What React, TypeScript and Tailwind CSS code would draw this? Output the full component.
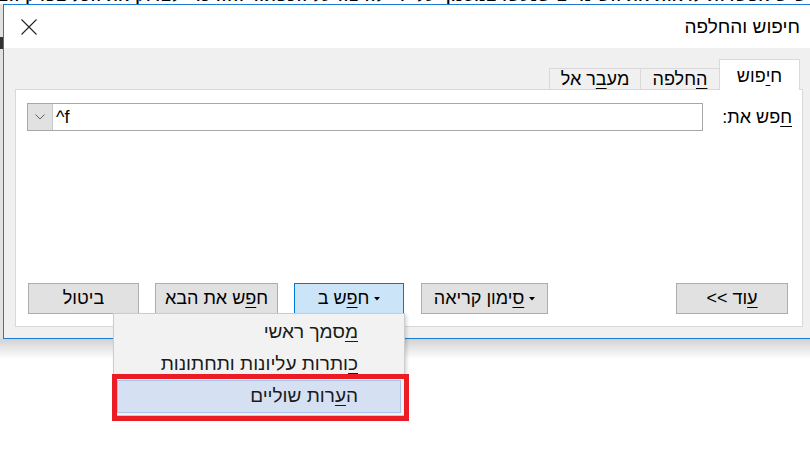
import React from "react";

const U = ({ children }: { children: React.ReactNode }) => (
  <span className="underline decoration-1 underline-offset-[3px]">{children}</span>
);

const Caret = () => (
  <svg width="6" height="4" viewBox="0 0 6 4" className="shrink-0">
    <path d="M0 0 L6 0 L3 3.5 Z" fill="#000" />
  </svg>
);

export default function App() {
  return (
    <div className="relative h-[456px] w-[810px] overflow-hidden bg-white text-black font-['Liberation_Sans','DejaVu_Sans',sans-serif]">
      {/* document text peeking above the dialog */}
      <div dir="rtl" className="h-[4px] overflow-hidden bg-white">
        <div className="-mt-[12px] whitespace-nowrap pr-[3px] text-[15px] font-bold leading-[15px] tracking-[1px]">
          שיש אפשרות לראות את השינויים שנעשו במסמך על ידי לחיצה על הכפתור הזה כדי לבדוק את הכל בפרק הבא
        </div>
      </div>

      <div className="flex h-[335px]">
        <div className="flex w-[3px] flex-col bg-[#e2e2e2]">
          <div className="mt-[33px] h-[12px] bg-[#333333]" />
        </div>
        <div dir="rtl" className="flex flex-1 flex-col border-y border-l border-[#1c7cd5]">
          {/* title bar */}
          <div className="flex h-[43px] shrink-0 items-center justify-between bg-white pl-[17px] pr-[10px]">
            <span className="text-[19px] leading-none">חיפוש והחלפה</span>
            <svg width="16" height="16" viewBox="0 0 16 16">
              <path d="M0.5 0.5 L15.5 15.5 M15.5 0.5 L0.5 15.5" stroke="#222" strokeWidth="1.1" fill="none" />
            </svg>
          </div>

          {/* body */}
          <div className="flex flex-1 flex-col bg-[#f0f0f0] pb-[11px] pl-[11px] pr-[7px] pt-[11px]">
            {/* tabs */}
            <div className="flex h-[30px] shrink-0 items-end pr-[3px] text-[18px]">
              <div className="relative z-10 -mb-px flex h-[31px] w-[81px] items-center justify-center border-x border-t border-[#d9d9d9] bg-white pt-[3px]">
                ח<U>י</U>פוש
              </div>
              <div className="flex h-[21px] w-[79px] items-center justify-center border-l border-t border-[#d9d9d9] bg-[#f0f0f0] pt-[1px]">
                <U>ה</U>חלפה
              </div>
              <div className="flex h-[21px] w-[91px] items-center justify-center border-l border-t border-[#d9d9d9] bg-[#f0f0f0] pt-[1px]">
                מע<U>ב</U>ר אל
              </div>
            </div>

            {/* panel */}
            <div className="flex flex-1 flex-col border border-[#d9d9d9] bg-white pb-[12px] pt-[13px] text-[18px]">
              <div className="flex h-[28px] items-center justify-between pl-[11px] pr-[10px]">
                <span>
                  <U>ח</U>פש את:
                </span>
                <div dir="ltr" className="flex h-[28px] w-[676px] items-stretch border border-[#a8a8a8] bg-white">
                  <div className="flex w-[25px] items-center justify-center border-r border-[#c8c8c8] bg-[#e1e1e1]">
                    <svg width="10" height="6" viewBox="0 0 10 6">
                      <path d="M0.5 0.5 L5 5 L9.5 0.5" stroke="#606060" strokeWidth="1" fill="none" />
                    </svg>
                  </div>
                  <div className="flex items-center pl-[3px]">^f</div>
                </div>
              </div>

              <div className="flex-1" />

              <div className="flex h-[31px] items-stretch justify-between pl-[12px] pr-[14px]">
                <div className="flex w-[112px] items-center justify-center border border-[#adadad] bg-[#e1e1e1]">
                  <U>ע</U>וד &gt;&gt;
                </div>
                <div className="flex items-stretch gap-[16px]">
                  <div className="ml-[1px] flex w-[127px] items-center justify-center gap-[5px] border border-[#adadad] bg-[#e1e1e1]">
                    <Caret />
                    <span>
                      <U>ס</U>ימון קריאה
                    </span>
                  </div>
                  <div className="flex w-[110px] items-center justify-center gap-[5px] border border-[#0078d7] bg-[#cce4f7]">
                    <Caret />
                    <span>
                      ח<U>פ</U>ש ב
                    </span>
                  </div>
                  <div className="flex w-[123px] items-center justify-center border border-[#adadad] bg-[#e1e1e1]">
                    ח<U>פ</U>ש את הבא
                  </div>
                  <div className="flex w-[111px] items-center justify-center border border-[#adadad] bg-[#e1e1e1]">
                    ביטול
                  </div>
                </div>
              </div>
            </div>
          </div>
        </div>
      </div>

      {/* shadow under the dialog */}
      <div className="h-[20px] bg-gradient-to-b from-[#d2d2d2] to-white" />

      {/* dropdown menu */}
      <div
        dir="rtl"
        className="absolute left-[113px] top-[313px] flex h-[103px] w-[292px] flex-col border border-[#cccccc] bg-[#f2f2f2] pt-[2px] text-[19px] text-[#1a1a1a] shadow-[2px_2px_3px_rgba(0,0,0,0.15)]"
      >
        <div className="flex h-[32px] items-center pr-[46px]">
          <U>מ</U>סמך ראשי
        </div>
        <div className="flex h-[32px] items-center pr-[46px]">
          <U>כ</U>ותרות עליונות ותחתונות
        </div>
        <div className="mx-[3px] flex h-[33px] items-center border border-[#a9c3e8] bg-[#d5e1f2] pr-[42px]">
          ה<U>ע</U>רות שוליים
        </div>
      </div>

      {/* red highlight frame */}
      <div className="absolute left-[112px] top-[374px] h-[47px] w-[297px] border-[5px] border-[#ec1c24]" />
    </div>
  );
}
